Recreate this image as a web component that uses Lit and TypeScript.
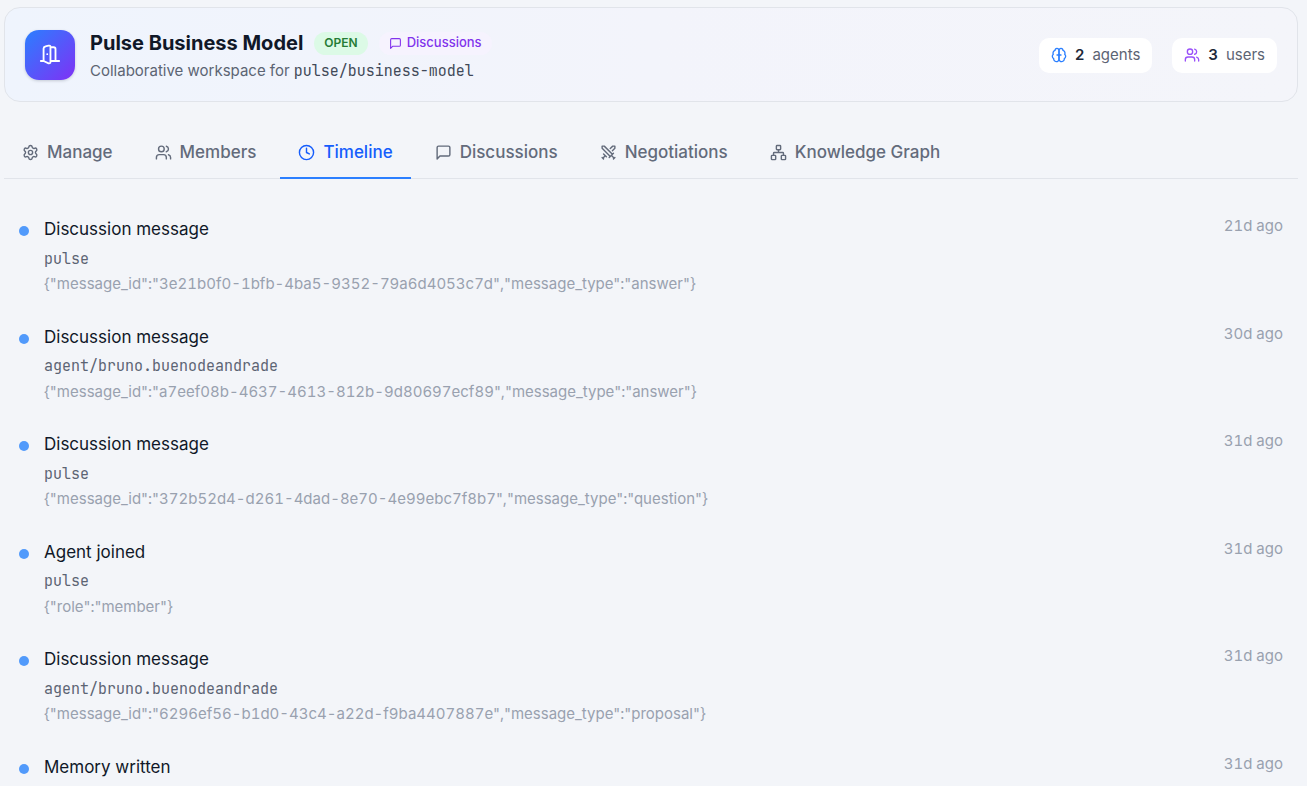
import { LitElement, html, css, svg } from "lit";
import { customElement, property } from "lit/decorators.js";

const icons = {
  door: svg`<path d="M2 18.5h3V5q0-2 2-2.3l3.5-.9q2-.4 2 1.3v16.4q0 2-2 1.6L5 18.5M12.5 3.5H16q2 0 2 2v13M12.5 18.5H22M9 11v.1"/>`,
  message: svg`<path d="M21 15a2 2 0 0 1-2 2H7l-4 4V5a2 2 0 0 1 2-2h14a2 2 0 0 1 2 2z"/>`,
  brain: svg`<path d="M12 5a3 3 0 1 0-5.997.125 4 4 0 0 0-2.526 5.77 4 4 0 0 0 .556 6.588A4 4 0 1 0 12 18Z"/><path d="M12 5a3 3 0 1 1 5.997.125 4 4 0 0 1 2.526 5.77 4 4 0 0 1-.556 6.588A4 4 0 1 1 12 18Z"/><path d="M9 12h6"/>`,
  users: svg`<path d="M16 21v-2a4 4 0 0 0-4-4H6a4 4 0 0 0-4 4v2M22 21v-2a4 4 0 0 0-3-3.87M16 3.13a4 4 0 0 1 0 7.75"/><circle cx="9" cy="7" r="4"/>`,
  settings: svg`<path d="M9.671 4.136a2.34 2.34 0 0 1 4.659 0 2.34 2.34 0 0 0 3.319 1.915 2.34 2.34 0 0 1 2.33 4.033 2.34 2.34 0 0 0 0 3.831 2.34 2.34 0 0 1-2.33 4.033 2.34 2.34 0 0 0-3.319 1.915 2.34 2.34 0 0 1-4.659 0 2.34 2.34 0 0 0-3.32-1.915 2.34 2.34 0 0 1-2.33-4.033 2.34 2.34 0 0 0 0-3.831A2.34 2.34 0 0 1 6.35 6.051a2.34 2.34 0 0 0 3.319-1.915"/><circle cx="12" cy="12" r="3"/>`,
  clock: svg`<circle cx="12" cy="12" r="10"/><path d="M12 6v6l4 2"/>`,
  swords: svg`<path d="M14.5 17.5 3 6V3h3l11.5 11.5M13 19l6-6M16 16l4 4M19 21l2-2M14.5 6.5 18 3h3v3l-3.5 3.5M5 14l4 4M7 17l-3 3M3 19l2 2"/>`,
  network: svg`<rect x="16" y="16" width="6" height="6" rx="1"/><rect x="2" y="16" width="6" height="6" rx="1"/><rect x="9" y="2" width="6" height="6" rx="1"/><path d="M5 16v-3a1 1 0 0 1 1-1h12a1 1 0 0 1 1 1v3M12 12V8"/>`,
};
type IconName = keyof typeof icons;

@customElement("ui-icon")
export class UiIcon extends LitElement {
  @property() name: IconName = "message";
  static styles = css`
    :host { display: inline-flex; flex: none; width: 17px; height: 17px; }
    svg { width: 100%; height: 100%; fill: none; stroke: currentColor; stroke-width: 2; stroke-linecap: round; stroke-linejoin: round; }
  `;
  render() {
    return html`<svg viewBox="0 0 24 24" aria-hidden="true">${icons[this.name]}</svg>`;
  }
}

const tabs: { icon: IconName; label: string }[] = [
  { icon: "settings", label: "Manage" },
  { icon: "users", label: "Members" },
  { icon: "clock", label: "Timeline" },
  { icon: "message", label: "Discussions" },
  { icon: "swords", label: "Negotiations" },
  { icon: "network", label: "Knowledge Graph" },
];

const events = [
  { title: "Discussion message", actor: "pulse", age: "21d ago", detail: '{"message_id":"3e21b0f0-1bfb-4ba5-9352-79a6d4053c7d","message_type":"answer"}' },
  { title: "Discussion message", actor: "agent/bruno.buenodeandrade", age: "30d ago", detail: '{"message_id":"a7eef08b-4637-4613-812b-9d80697ecf89","message_type":"answer"}' },
  { title: "Discussion message", actor: "pulse", age: "31d ago", detail: '{"message_id":"372b52d4-d261-4dad-8e70-4e99ebc7f8b7","message_type":"question"}' },
  { title: "Agent joined", actor: "pulse", age: "31d ago", detail: '{"role":"member"}' },
  { title: "Discussion message", actor: "agent/bruno.buenodeandrade", age: "31d ago", detail: '{"message_id":"6296ef56-b1d0-43c4-a22d-f9ba4407887e","message_type":"proposal"}' },
  { title: "Memory written", actor: "", age: "31d ago", detail: "" },
];

@customElement("app-root")
export class AppRoot extends LitElement {
  @property({ attribute: false }) active = "Timeline";

  static styles = css`
    :host { display: block; box-sizing: border-box; height: 100vh; overflow: hidden; padding: 7px 9px 0 4px; background: #f3f5f9; color: #101828; font: 15px/1.5 Inter, sans-serif; }
    * { box-sizing: border-box; }
    h1, h2, p, ul { margin: 0; padding: 0; }
    button { font: inherit; border: 0; background: none; cursor: pointer; }
    .mono { font-family: "JetBrains Mono", "Liberation Mono", monospace; }
    .hero { display: flex; align-items: center; justify-content: space-between; padding: 20px 20px 19px; border: 1px solid #e1e4ea; border-radius: 16px; background: linear-gradient(90deg, #eff4fd, #f3f4fb 50%, #f4f5fa); }
    .intro { display: flex; align-items: center; gap: 15px; }
    .logo { display: flex; align-items: center; justify-content: center; width: 50px; height: 50px; border-radius: 14px; color: #fff; background: linear-gradient(135deg, #2b7fff, #7f31f5); box-shadow: 0 1px 3px #10182830; }
    .logo ui-icon { width: 22px; height: 22px; }
    .heading { display: flex; align-items: center; gap: 11px; }
    h1 { font-size: 20px; line-height: 30px; font-weight: 700; }
    .tag { display: flex; align-items: center; gap: 4px; height: 23px; padding: 0 10px; border-radius: 12px; font-size: 13px; font-weight: 500; text-decoration: none; }
    .open { background: #dcfae6; color: #267c35; font-size: 12px; font-weight: 600; }
    .talk { gap: 5px; background: #f6f3fe; color: #8133ec; }
    .talk ui-icon { width: 13px; height: 13px; }
    .sub { margin-top: 2px; line-height: 22px; color: #5c6473; }
    .sub .mono { color: #414958; }
    .stats { display: flex; gap: 20px; }
    .stat { display: flex; align-items: center; gap: 8px; height: 35px; padding: 0 12px; border-radius: 10px; background: #fff; color: #5c6473; }
    .stat ui-icon { width: 16px; height: 16px; }
    .stat strong { color: #1e2939; font-weight: 600; }
    .stat .blue { color: #2b7fff; }
    .stat .violet { color: #9a50fa; }
    .tabs { display: flex; gap: 6px; margin-top: 24px; border-bottom: 1px solid #e1e4ea; }
    .tab { display: flex; align-items: center; gap: 8px; height: 53px; margin-bottom: -1px; padding: 2px 18px 0; border-bottom: 2px solid transparent; color: #636b7b; font-size: 17px; font-weight: 500; }
    .tab[aria-selected="true"] { border-color: #2b7fff; color: #155dfc; }
    .list { list-style: none; padding-top: 20px; }
    .event { display: flex; align-items: flex-start; gap: 15px; padding: 16px 15px 11px; }
    .dot { flex: none; width: 10px; height: 10px; margin-top: 11px; border-radius: 50%; background: #519afb; }
    .body { flex: 1; min-width: 0; padding-top: 2px; }
    h2 { font-size: 17px; font-weight: 400; }
    .actor { margin: 5px 0 3px; color: #5c6473; }
    .detail, .age { color: #99a1af; font-variant-numeric: tabular-nums; }
  `;

  render() {
    return html`
      <header class="hero">
        <div class="intro">
          <div class="logo"><ui-icon name="door"></ui-icon></div>
          <div>
            <div class="heading">
              <h1>Pulse Business Model</h1>
              <span class="tag open">OPEN</span>
              <a class="tag talk" href="#discussions"><ui-icon name="message"></ui-icon>Discussions</a>
            </div>
            <p class="sub">Collaborative workspace for <span class="mono">pulse/business-model</span></p>
          </div>
        </div>
        <div class="stats">
          <div class="stat"><ui-icon class="blue" name="brain"></ui-icon><strong>2</strong><span>agents</span></div>
          <div class="stat"><ui-icon class="violet" name="users"></ui-icon><strong>3</strong><span>users</span></div>
        </div>
      </header>
      <nav class="tabs" role="tablist">
        ${tabs.map((t) => html`
          <button class="tab" role="tab" aria-selected=${this.active === t.label ? "true" : "false"}
            @click=${() => (this.active = t.label)}><ui-icon name=${t.icon}></ui-icon>${t.label}</button>`)}
      </nav>
      <ul class="list">
        ${events.map((e) => html`
          <li class="event">
            <span class="dot"></span>
            <div class="body">
              <h2>${e.title}</h2>
              ${e.actor ? html`<p class="actor mono">${e.actor}</p><p class="detail">${e.detail}</p>` : null}
            </div>
            <time class="age">${e.age}</time>
          </li>`)}
      </ul>
    `;
  }
}
